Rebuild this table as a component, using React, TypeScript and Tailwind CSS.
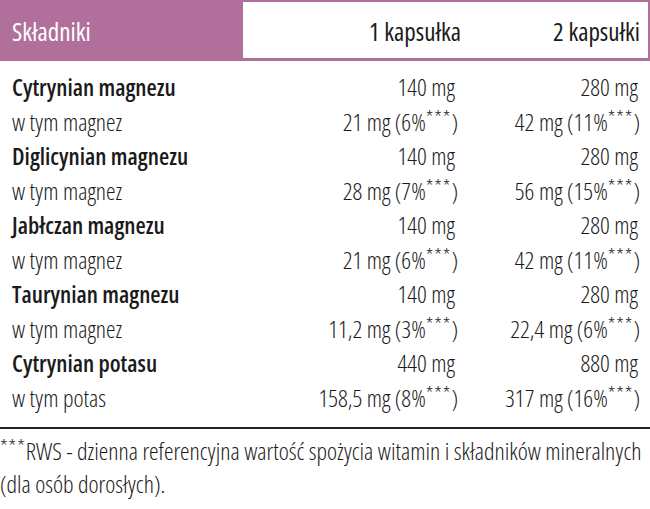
import React from "react";

type Row = { name: string; v1: string; v2: string; sub: string; s1: string; s2: string };

const rows: Row[] = [
  { name: "Cytrynian magnezu", v1: "140 mg", v2: "280 mg", sub: "w tym magnez", s1: "21 mg (6%", s2: "42 mg (11%" },
  { name: "Diglicynian magnezu", v1: "140 mg", v2: "280 mg", sub: "w tym magnez", s1: "28 mg (7%", s2: "56 mg (15%" },
  { name: "Jabłczan magnezu", v1: "140 mg", v2: "280 mg", sub: "w tym magnez", s1: "21 mg (6%", s2: "42 mg (11%" },
  { name: "Taurynian magnezu", v1: "140 mg", v2: "280 mg", sub: "w tym magnez", s1: "11,2 mg (3%", s2: "22,4 mg (6%" },
  { name: "Cytrynian potasu", v1: "440 mg", v2: "880 mg", sub: "w tym potas", s1: "158,5 mg (8%", s2: "317 mg (16%" },
];

function Pct({ text }: { text: string }) {
  return (
    <span>
      {text}
      <sup className="text-[21px] top-[-6px] tracking-[1px]">***</sup>)
    </span>
  );
}

export default function App() {
  return (
    <div className="w-[650px] h-[509px] bg-white text-[#1a1a1a] font-['Open_Sans',sans-serif] font-stretch-condensed overflow-hidden whitespace-nowrap">
      <div className="flex h-[61px] bg-[#b16f9b]">
        <div className="w-[243px] flex items-center pl-[12px] pt-[3px] text-white text-[25px] font-normal">Składniki</div>
        <div className="flex-1 flex items-center pt-[3px] bg-white mt-[2px] mb-[3px] mr-[2px] text-[25px] font-normal">
          <div className="w-[218px] text-right">1 kapsułka</div>
          <div className="w-[179px] text-right">2 kapsułki</div>
        </div>
      </div>
      <div className="pt-[9px]">
        {rows.map((r, i) => (
          <React.Fragment key={i}>
            <div className="flex h-[34.5px] items-center text-[24px]">
              <div className="flex-1 pl-[12px] font-[580] text-[23.5px]">{r.name}</div>
              <div className="w-[218px] text-right font-[330] pr-[6px]">{r.v1}</div>
              <div className="w-[179px] text-right pr-[2px] font-[330]">{r.v2}</div>
              <div className="w-[10px]" />
            </div>
            <div className="flex h-[34.5px] items-center text-[24px] font-[330]">
              <div className="flex-1 pl-[12px]">{r.sub}</div>
              <div className="w-[218px] text-right pr-[3px]"><Pct text={r.s1} /></div>
              <div className="w-[179px] text-right"><Pct text={r.s2} /></div>
              <div className="w-[10px]" />
            </div>
          </React.Fragment>
        ))}
      </div>
      <div className="h-[2px] bg-[#222] mt-[12px]" />
      <div className="text-[24px] leading-[33px] pt-[5px] font-[330]">
        <sup className="text-[21px] top-[-6px] tracking-[1px]">***</sup>RWS - dzienna referencyjna wartość spożycia witamin i składników mineralnych
        <br />
        (dla osób dorosłych).
      </div>
    </div>
  );
}
